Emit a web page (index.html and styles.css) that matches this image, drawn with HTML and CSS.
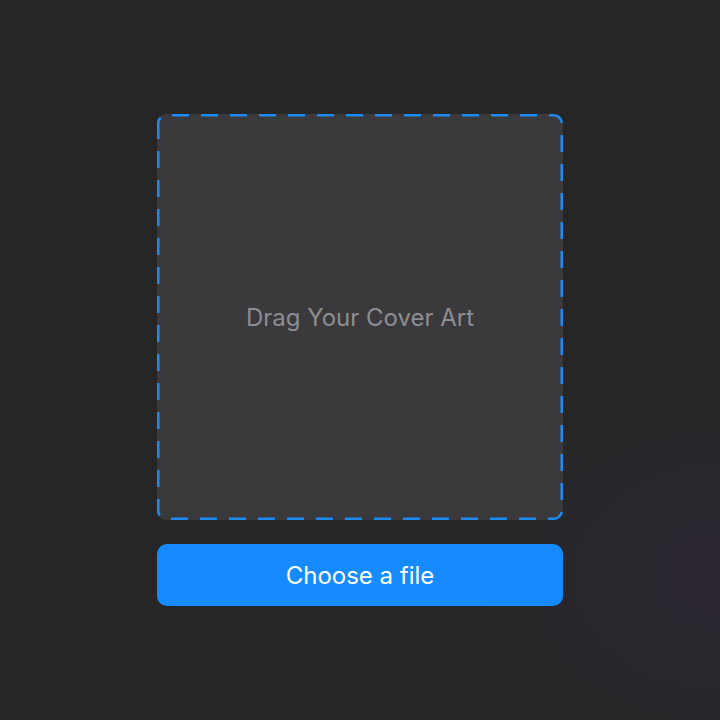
FILE: index.html
```html
<!DOCTYPE html>
<html lang="en">
<head>
<meta charset="utf-8">
<link rel="stylesheet" href="styles.css">
</head>
<body>
<main class="page">
  <div class="uploader">
    <div class="dropzone">
      <svg class="dash" width="406" height="406" viewBox="0 0 406 406">
        <path d="M1.25 20 L1.25 9.25 A8 8 0 0 1 9.25 1.25 L396.75 1.25 A8 8 0 0 1 404.75 9.25 L404.75 396.75 A8 8 0 0 1 396.75 404.75 L9.25 404.75 A8 8 0 0 1 1.25 396.75 Z" fill="none" stroke="#1c8bf5" stroke-width="2.5" stroke-dasharray="17 12" stroke-linecap="butt"/>
      </svg>
      <span class="droptext">Drag Your Cover Art</span>
    </div>
    <button class="choose">Choose a file</button>
  </div>
</main>
</body>
</html>
```
FILE: styles.css
```css
html, body {
  margin: 0;
  height: 100%;
}
body {
  background: #262626;
  background-image: radial-gradient(ellipse 260px 200px at 100% 80%, rgba(50, 38, 64, 0.45), rgba(38, 38, 38, 0) 100%);
  font-family: Inter, "Noto Sans", sans-serif;
}
.page {
  height: 720px;
  display: flex;
  align-items: center;
  justify-content: center;
}
.uploader {
  width: 406px;
  display: flex;
  flex-direction: column;
  gap: 24px;
}
.dropzone {
  position: relative;
  width: 406px;
  height: 406px;
  border-radius: 9px;
  background: #3a393c;
  display: flex;
  align-items: center;
  justify-content: center;
}
.dash {
  position: absolute;
  left: 0;
  top: 0;
}
.droptext {
  color: #8e8d92;
  font-size: 24px;
}
.choose {
  height: 62px;
  border: none;
  border-radius: 10px;
  background: #158bff;
  color: #ffffff;
  font-family: Inter, "Noto Sans", sans-serif;
  font-size: 24px;
  padding: 0;
  cursor: pointer;
}
```
